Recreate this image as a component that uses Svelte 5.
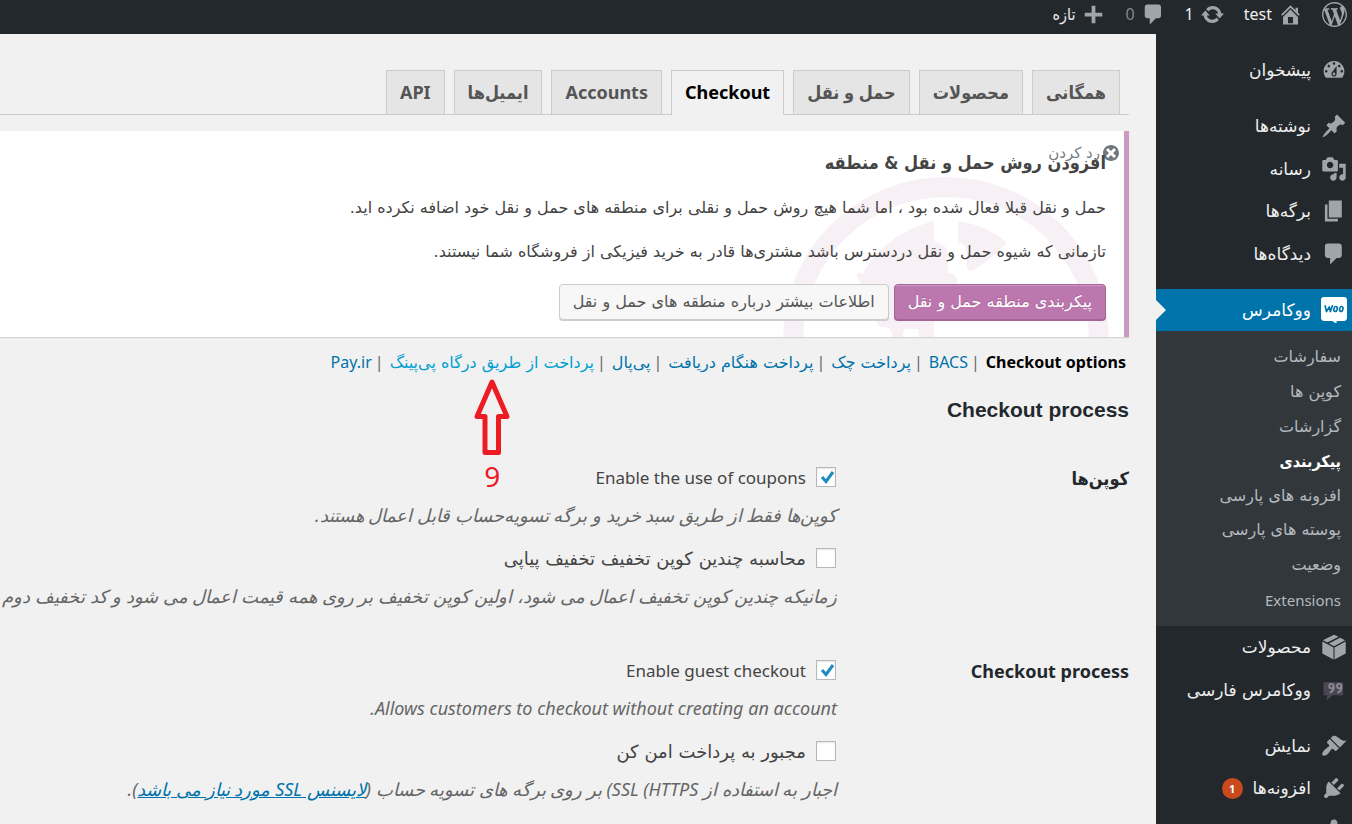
<script lang="ts">
  type Item = { label: string; icon: string; badge?: string };

  const icons: Record<string, string> = {
    wordpress:
      'M20 10c0-5.51-4.49-10-10-10C4.48 0 0 4.49 0 10c0 5.52 4.48 10 10 10 5.51 0 10-4.48 10-10zM7.78 15.37L4.37 6.22c.55-.02 1.17-.08 1.17-.08.5-.06.44-1.13-.06-1.11 0 0-1.45.11-2.37.11-.18 0-.37 0-.58-.01C4.12 2.69 6.87 1.11 10 1.11c2.33 0 4.45.87 6.05 2.34-.68-.11-1.65.39-1.65 1.58 0 .74.45 1.36.9 2.1.35.61.55 1.36.55 2.46 0 1.49-1.4 5-1.4 5l-3.03-8.37c.54-.02.82-.17.82-.17.5-.05.44-1.25-.06-1.22 0 0-1.44.12-2.38.12-.87 0-2.33-.12-2.33-.12-.5-.03-.56 1.2-.06 1.22l.92.08 1.26 3.41zM17.41 10c.24-.64.74-1.87.43-4.25.7 1.29 1.05 2.71 1.05 4.25 0 3.29-1.73 6.24-4.4 7.78.97-2.59 1.94-5.2 2.92-7.78zM6.1 18.09C3.12 16.65 1.11 13.53 1.11 10c0-1.3.23-2.48.72-3.59C3.25 10.3 4.67 14.2 6.1 18.09zm4.03-6.63l2.58 6.98c-.86.29-1.76.45-2.71.45-.79 0-1.57-.11-2.29-.33.81-2.38 1.62-4.74 2.42-7.1z',
    home: 'M16 8.5l1.53 1.53-1.06 1.06L10 4.6l-6.47 6.49-1.06-1.06L10 2.5l4 4v-2h2v4zm-6-2.46l6 5.99V18H4v-5.97zM12 17v-5H8v5h4z',
    update:
      'M10.2 3.28c3.53 0 6.43 2.61 6.92 6h2.08l-3.5 4-3.5-4h2.32c-.45-1.97-2.21-3.45-4.32-3.45-1.45 0-2.73.71-3.54 1.78L4.95 5.66C6.23 4.2 8.11 3.28 10.2 3.28zm-.4 13.44c-3.52 0-6.43-2.61-6.92-6H.8l3.5-4c1.17 1.33 2.33 2.67 3.5 4H5.48c.45 1.97 2.21 3.45 4.32 3.45 1.45 0 2.73-.71 3.54-1.78l1.71 1.95c-1.28 1.46-3.15 2.38-5.25 2.38z',
    comment: 'M5 2h9c1.1 0 2 .9 2 2v7c0 1.1-.9 2-2 2h-2l-5 5v-5H5c-1.1 0-2-.9-2-2V4c0-1.1.9-2 2-2z',
    plus: 'M17 8.500v3h-5.500v5.500h-3v-5.500H3v-3h5.500V3h3v5.500z',
    dashboard:
      'M3.76 16h12.48c1.1-1.37 1.76-3.11 1.76-5 0-4.42-3.58-8-8-8s-8 3.580-8 8c0 1.89.66 3.63 1.76 5zM10 4c.55 0 1 .45 1 1s-.45 1-1 1-1-.45-1-1 .45-1 1-1zM6 6c.55 0 1 .45 1 1s-.45 1-1 1-1-.45-1-1 .45-1 1-1zm8 0c.55 0 1 .45 1 1s-.45 1-1 1-1-.45-1-1 .45-1 1-1zm-5.370 5.550L12 7v6c0 1.1-.9 2-2 2s-2-.9-2-2c0-.57.24-1.080.63-1.450zM4 10c.55 0 1 .45 1 1s-.45 1-1 1-1-.45-1-1 .45-1 1-1zm12 0c.55 0 1 .45 1 1s-.45 1-1 1-1-.45-1-1 .45-1 1-1zm-5 3c0-.55-.45-1-1-1s-1 .45-1 1 .45 1 1 1 1-.45 1-1z',
    post: 'M10.44 3.02l1.82-1.82 6.36 6.35-1.83 1.82c-1.05-.68-2.48-.57-3.41.36l-.75.75c-.92.93-1.04 2.35-.35 3.41l-1.83 1.82-2.41-2.41-2.8 2.79c-.42.42-3.38 2.71-3.8 2.29s1.86-3.39 2.28-3.81l2.79-2.79L4.1 9.36l1.83-1.82c1.05.69 2.48.57 3.4-.36l.75-.75c.93-.92 1.05-2.35.36-3.41z',
    media:
      'M13 11V4c0-.55-.45-1-1-1h-1.670L9 1H5L3.670 3H2c-.55 0-1 .45-1 1v7c0 .55.45 1 1 1h10c.55 0 1-.45 1-1zM7 4.500c1.380 0 2.500 1.120 2.500 2.500S8.380 9.500 7 9.500 4.500 8.380 4.500 7 5.620 4.500 7 4.500zM14 6h5v10.500c0 1.380-1.120 2.500-2.500 2.500S14 17.880 14 16.500s1.120-2.500 2.500-2.500c.17 0 .34.02.5.05V9h-3V6zm-4 8.050V13h2v3.500c0 1.380-1.120 2.500-2.500 2.500S7 17.880 7 16.500 8.120 14 9.500 14c.17 0 .34.02.5.05z',
    page: 'M6 15V2h10v13H6zm-1 1h8v2H3V5h2v11z',
    product: 'M10 .5l3.500 1.700-8.600 4.400L1.400 4.800zM14.700 2.800l3.900 2L10 9.500 6.100 7.300zM1 5.700l8.600 4.600V19.700L1 15zM19 5.700l-8.600 4.600V19.700L19 15z',
    appearance:
      'M14.48 11.06L7.41 3.99l1.5-1.5c.5-.56 2.3-.47 3.51.32 1.21.8 1.43 1.28 2.91 2.1 1.18.64 2.45 1.26 4.45.85zm-.71.71L6.7 4.7 4.93 6.47c-.39.39-.39 1.02 0 1.41l1.06 1.06c.39.39.39 1.03 0 1.42-.6.6-1.43 1.11-2.21 1.69-.35.26-.7.53-1.01.84C1.43 14.23.4 16.08 1.4 17.07c.99 1 2.84-.03 4.18-1.36.31-.31.58-.66.85-1.02.57-.78 1.08-1.61 1.69-2.21.39-.39 1.02-.39 1.41 0l1.06 1.06c.39.39 1.02.39 1.41 0z',
    plugins:
      'M13.11 4.36L9.87 7.6 8 5.73l3.24-3.24c.35-.34 1.05-.2 1.56.32.52.51.66 1.21.31 1.55zm-8 1.77l.91-1.12 9.01 9.01-1.19.84c-.71.71-2.63 1.16-3.82 1.16H6.14L4.9 17.26c-.59.59-1.54.59-2.12 0-.59-.58-.59-1.53 0-2.12l1.24-1.24v-3.88c0-1.13.4-3.19 1.09-3.89zm7.26 3.97l3.24-3.24c.34-.35 1.04-.21 1.55.31.52.51.66 1.21.31 1.55l-3.24 3.25z',
    users: 'M10 9.250c-2.270 0-2.730-3.440-2.730-3.440C7 4.020 7.820 2 9.970 2c2.160 0 2.980 2.020 2.710 3.810 0 0-.41 3.440-2.680 3.440zm0 2.570L12.720 10c2.390 0 4.520 2.330 4.520 4.530v2.490s-3.650 1.130-7.240 1.130c-3.650 0-7.240-1.130-7.240-1.130v-2.490c0-2.250 1.940-4.480 4.470-4.480z',
    dismiss:
      'M10 2c4.42 0 8 3.58 8 8s-3.58 8-8 8-8-3.58-8-8 3.58-8 8-8zm5 11l-3-3 3-3-2-2-3 3-3-3-2 2 3 3-3 3 2 2 3-3 3 3z',
  };

  const contentMenu: Item[] = [
    { label: 'نوشته‌ها', icon: 'post' },
    { label: 'رسانه', icon: 'media' },
    { label: 'برگه‌ها', icon: 'page' },
    { label: 'دیدگاه‌ها', icon: 'comment' },
  ];
  const submenu = ['سفارشات', 'کوپن ها', 'گزارشات', 'پیکربندی', 'افزونه های پارسی', 'پوسته های پارسی', 'وضعیت', 'Extensions'];
  const shopMenu: Item[] = [
    { label: 'محصولات', icon: 'product' },
    { label: 'ووکامرس فارسی', icon: 'persian' },
  ];
  const siteMenu: Item[] = [
    { label: 'نمایش', icon: 'appearance' },
    { label: 'افزونه‌ها', icon: 'plugins', badge: '1' },
  ];

  const tabs = ['همگانی', 'محصولات', 'حمل و نقل', 'Checkout', 'Accounts', 'ایمیل‌ها', 'API'];
  const gateways = ['Checkout options', 'BACS', 'پرداخت چک', 'پرداخت هنگام دریافت', 'پی‌پال', 'پرداخت از طریق درگاه پی‌پینگ', 'Pay.ir'];
  const isLatin = (text: string) => /^[A-Za-z]/.test(text);
</script>

{#snippet icon(name: string)}
  <svg class="icon" viewBox="0 0 20 20" aria-hidden="true"><path fill-rule="evenodd" d={icons[name]} /></svg>
{/snippet}

{#snippet menuItem(item: Item)}
  <a class="item" href="#menu">
    {#if item.icon === 'persian'}
      <svg class="icon" viewBox="0 0 20 20" aria-hidden="true">
        <path d="M2 4h15v10H9l-5 4 1-4H2z" fill="#4b4654" />
        <g fill="none" stroke="#8d8a94" stroke-width="1.400">
          <circle cx="8" cy="7" r="1.700" /><path d="M9.700 7q.4 4-3 5" />
          <circle cx="14" cy="7" r="1.700" /><path d="M15.700 7q.4 4-3 5" />
        </g>
      </svg>
    {:else}
      {@render icon(item.icon)}
    {/if}
    <span>{item.label}</span>
    {#if item.badge}<span class="badge">{item.badge}</span>{/if}
  </a>
{/snippet}

<div class="page" dir="rtl">
  <header class="bar">
    <a href="#wp" aria-label="WordPress">{@render icon('wordpress')}</a>
    <a href="#site">{@render icon('home')}<span>test</span></a>
    <a href="#updates">{@render icon('update')}<span>1</span></a>
    <a href="#comments">{@render icon('comment')}<span class="dim">0</span></a>
    <a href="#new">{@render icon('plus')}<span>تازه</span></a>
  </header>

  <div class="columns">
    <nav class="side">
      <div class="group">{@render menuItem({ label: 'پیشخوان', icon: 'dashboard' })}</div>
      <div class="group content-group">
        {#each contentMenu as item}{@render menuItem(item)}{/each}
      </div>
      <div>
        <a class="item current" href="#woo">
          <svg class="icon" viewBox="0 0 25 25" aria-hidden="true">
            <path d="M3 0h19q3 0 3 3v17q0 3-3 3h-7v3l-4-3H3q-3 0-3-3V3q0-3 3-3z" fill="#fff" />
            <g fill="none" stroke="#0073aa" stroke-width="1.600" stroke-linejoin="round" stroke-linecap="round">
              <path d="M4 8.500l1.300 5.500L8 9.500l1 4.500 2-5.500" />
              <ellipse cx="14" cy="11.500" rx="1.600" ry="2.400" transform="rotate(12 14 11.500)" />
              <ellipse cx="19.500" cy="11.500" rx="1.600" ry="2.400" transform="rotate(12 19.500 11.500)" />
            </g>
          </svg>
          <span>ووکامرس</span>
        </a>
        <div class="submenu">
          {#each submenu as label}
            <a href="#sub" class:latin={isLatin(label)} class:selected={label === 'پیکربندی'}>{label}</a>
          {/each}
        </div>
      </div>
      <div class="group shop-group">
        {#each shopMenu as item}{@render menuItem(item)}{/each}
      </div>
      <div class="group">
        {#each siteMenu as item}{@render menuItem(item)}{/each}
        <a class="item" href="#users" aria-label="کاربران">{@render icon('users')}</a>
      </div>
    </nav>

    <main>
      <nav class="tabs">
        {#each tabs as tab}
          <a href="#tab" class:active={tab === 'Checkout'}>{tab}</a>
        {/each}
      </nav>

      <section class="notice">
        <svg class="mark" viewBox="0 0 326 160" aria-hidden="true">
          <circle cx="163" cy="163" r="153" fill="none" stroke="#f7f0f5" stroke-width="20" />
          <g fill="#f7f0f5">
            <path d="M151 44V60Q151 65 156 66 165 69 165 79V96Q174 96 174 104V115L151 143V160H136V155Q136 152 133 152H123Q120 152 120 155V160H110L108 154Q107 150 100 150 94 150 94 144L92 138 78 107Q76 101 73 98 76 94 80 97 87 82 100 71 120 52 151 44Z" />
            <path d="M175 44Q204 48 224 66 208 82 192 92 184 97 184 87V76Q184 66 175 66Z" />
          </g>
        </svg>
        <button class="dismiss" type="button">{@render icon('dismiss')}<span>رد کردن</span></button>
        <h3>افزودن روش حمل و نقل &amp; منطقه</h3>
        <p>حمل و نقل قبلا فعال شده بود ، اما شما هیچ روش حمل و نقلی برای منطقه های حمل و نقل خود اضافه نکرده اید.</p>
        <p>تازمانی که شیوه حمل و نقل دردسترس باشد مشتری‌ها قادر به خرید فیزیکی از فروشگاه شما نیستند.</p>
        <div class="actions">
          <button class="btn primary" type="button">پیکربندی منطقه حمل و نقل</button>
          <button class="btn" type="button">اطلاعات بیشتر درباره منطقه های حمل و نقل</button>
        </div>
      </section>

      <ul class="gateways">
        {#each gateways as name, i}
          <li>
            <a href="#gateway" class:latin={isLatin(name)} class:chosen={i === 0} class:hover={i === 5}>{name}</a>{#if i < gateways.length - 1}<span class="pipe">|</span>{/if}
            {#if i === 5}
              <span class="pointer">
                <svg width="36" height="78" viewBox="0 0 36 78" aria-hidden="true">
                  <path d="M18 4L33 38.500H24.500V74.500H11V38.500H3z" fill="none" stroke="#ed1c24" stroke-width="5" stroke-linejoin="round" />
                </svg>
                <span>9</span>
              </span>
            {/if}
          </li>
        {/each}
      </ul>

      <form>
        <h2>Checkout process</h2>
        <div class="row" role="group" aria-labelledby="coupons">
          <strong id="coupons">کوپن‌ها</strong>
          <div class="fields">
            <label><input type="checkbox" checked /><span class="latin">Enable the use of coupons</span></label>
            <p>کوپن‌ها فقط از طریق سبد خرید و برگه تسویه‌حساب قابل اعمال هستند.</p>
            <label><input type="checkbox" /><span>محاسبه چندین کوپن تخفیف تخفیف پیاپی</span></label>
            <p>زمانیکه چندین کوپن تخفیف اعمال می شود، اولین کوپن تخفیف بر روی همه قیمت اعمال می شود و کد تخفیف دوم بر روی قیمت</p>
          </div>
        </div>
        <div class="row" role="group" aria-labelledby="process">
          <strong id="process">Checkout process</strong>
          <div class="fields">
            <label><input type="checkbox" checked /><span class="latin">Enable guest checkout</span></label>
            <p>Allows customers to checkout without creating an account.</p>
            <label><input type="checkbox" /><span>مجبور به پرداخت امن کن</span></label>
            <p>اجبار به استفاده از <bdi dir="ltr">SSL (HTTPS</bdi>) بر روی برگه های تسویه حساب (<a href="#ssl">لایسنس SSL مورد نیاز می باشد</a>).</p>
          </div>
        </div>
      </form>
    </main>
  </div>
</div>

<style>
  :global(body) { margin: 0; background: #f1f1f1; }
  .page {
    --latin: Tahoma, 'Noto Sans', 'DejaVu Sans Condensed', 'DejaVu Sans', sans-serif;
    height: 100vh;
    overflow: hidden;
    display: flex;
    flex-direction: column;
    background: #f1f1f1;
    color: #444;
    font-family: Tahoma, 'DejaVu Sans', sans-serif;
    font-size: 16px;
    line-height: 24px;
  }
  a { color: #0073aa; text-decoration: none; }
  button { font: inherit; cursor: pointer; }
  .icon { width: 26px; height: 26px; flex: none; fill: #a0a5aa; }
  .latin { font-family: var(--latin); }

  .bar { flex: none; height: 34px; display: flex; align-items: center; gap: 19px; padding: 0 5px 6px; background: #23282d; box-sizing: border-box; font-family: var(--latin); }
  .bar a { display: flex; align-items: center; gap: 6px; color: #eee; }
  .bar .icon { width: 25px; height: 25px; }
  .bar .dim { color: #82878c; }

  .columns { flex: 1; min-height: 0; display: flex; }
  .side { flex: none; width: 196px; background: #23282d; padding-top: 15px; display: flex; flex-direction: column; font-size: 17px; box-sizing: border-box; }
  .group { display: grid; grid-auto-rows: 1fr; margin-bottom: 14px; }
  .content-group { min-height: 170px; }
  .shop-group { min-height: 85px; }
  .item { display: flex; align-items: center; gap: 10px; min-height: 42px; padding-right: 5px; color: #eee; }
  .current { background: #0073aa; color: #fff; position: relative; }
  .current::after { content: ''; position: absolute; left: 0; top: 11px; border: 10px solid transparent; border-left-color: #f1f1f1; border-right-width: 0; }
  .badge { width: 21px; height: 21px; border-radius: 50%; background: #ca4a1f; color: #fff; font: 700 11px/21px var(--latin); text-align: center; }
  .submenu { background: #32373c; box-sizing: border-box; height: 295px; padding: 9px 11px; display: grid; grid-auto-rows: 1fr; align-items: center; font-size: 16px; }
  .submenu a { color: #b4b9be; }
  .submenu .latin { font-size: 15px; }
  .submenu .selected { color: #fff; font-weight: 700; font-family: var(--latin); }

  main { flex: 1; min-width: 0; padding: 36px 27px 0 0; overflow: hidden; }
  .tabs { display: flex; align-items: flex-end; gap: 9px; padding-right: 9px; border-bottom: 1px solid #ccc; }
  .tabs a { height: 43px; padding: 0 13px; border: 1px solid #ccc; border-bottom: 0; background: #e5e5e5; color: #555; font: 700 18px/43px var(--latin); }
  .tabs .active { background: #f1f1f1; color: #000; margin-bottom: -1px; height: 44px; }

  .notice { position: relative; margin-top: 16px; padding: 20px 18px 17px; border-right: 5px solid #cc99c2; background: #fff; box-shadow: 0 1px 1px rgba(0, 0, 0, 0.12); }
  .mark { position: absolute; right: 15px; bottom: 0; width: 326px; height: 160px; }
  .notice h3, .notice p, .actions { position: relative; margin: 0; }
  .notice h3 { font: 700 18px/24px 'DejaVu Sans Condensed', 'DejaVu Sans', sans-serif; margin-bottom: 21px; }
  .notice p { margin-bottom: 20px; }
  .actions { display: flex; gap: 5px; }
  .btn { height: 36px; padding: 0 13px; border: 1px solid #ccc; border-radius: 4px; background: #f7f7f7; color: #555; box-shadow: 0 1px 0 #ccc; }
  .primary { background: #bb77ae; border-color: #a36597; color: #fff; box-shadow: inset 0 1px 0 rgba(255, 255, 255, 0.25), 0 1px 0 #a36597; text-shadow: 0 -1px 1px #a36597; }
  .dismiss { position: absolute; top: 10px; right: 3px; display: flex; align-items: center; gap: 1px; padding: 0; border: 0; background: none; color: #787c82; font-size: 15px; }
  .dismiss .icon { width: 20px; height: 20px; fill: #72777c; }

  .gateways { display: flex; margin: 13px 0 0; padding: 0 3px 0 0; list-style: none; white-space: nowrap; }
  .gateways li { position: relative; margin-left: 3px; }
  .pipe { margin-right: 6px; color: #666; font-family: var(--latin); }
  .chosen { color: #000; font-weight: 700; }
  .hover { color: #00a0d2; }
  .pointer { position: absolute; top: 28px; left: 50%; margin-left: -10px; width: 36px; display: flex; flex-direction: column; align-items: center; color: #ed1c24; font: 28px/40px var(--latin); }

  h2 { margin: 22px 0 0; font: 700 21px/26px 'Liberation Sans', Arial, sans-serif; color: #23282d; }
  .row { display: flex; padding-top: 43px; }
  .row + .row { padding-top: 51px; }
  .row strong { flex: none; width: 292px; font: 700 18px/24px var(--latin); color: #23282d; }
  .fields { flex: 1; min-width: 0; font-size: 18px; line-height: 24px; white-space: nowrap; }
  .fields label { display: flex; align-items: center; gap: 10px; width: max-content; }
  .fields .latin { font-size: 17px; }
  .fields p { margin: 13px 0 20px; font-family: var(--latin); font-style: italic; color: #666; }
  .fields p:last-child { margin-bottom: 0; }
  .fields p a { text-decoration: underline; }
  input { appearance: none; margin: 0 1px 2px 0; width: 20px; height: 20px; border: 1px solid #b4b9be; background: #fff; box-shadow: inset 0 1px 2px rgba(0, 0, 0, 0.1); }
  input:checked { background: #fff url("data:image/svg+xml,%3Csvg xmlns='http://www.w3.org/2000/svg' viewBox='0 0 18 18'%3E%3Cpath d='M5 9l4 4.500L16 4' fill='none' stroke='%231e8cbe' stroke-width='3'/%3E%3C/svg%3E") center / 18px no-repeat; }
</style>
